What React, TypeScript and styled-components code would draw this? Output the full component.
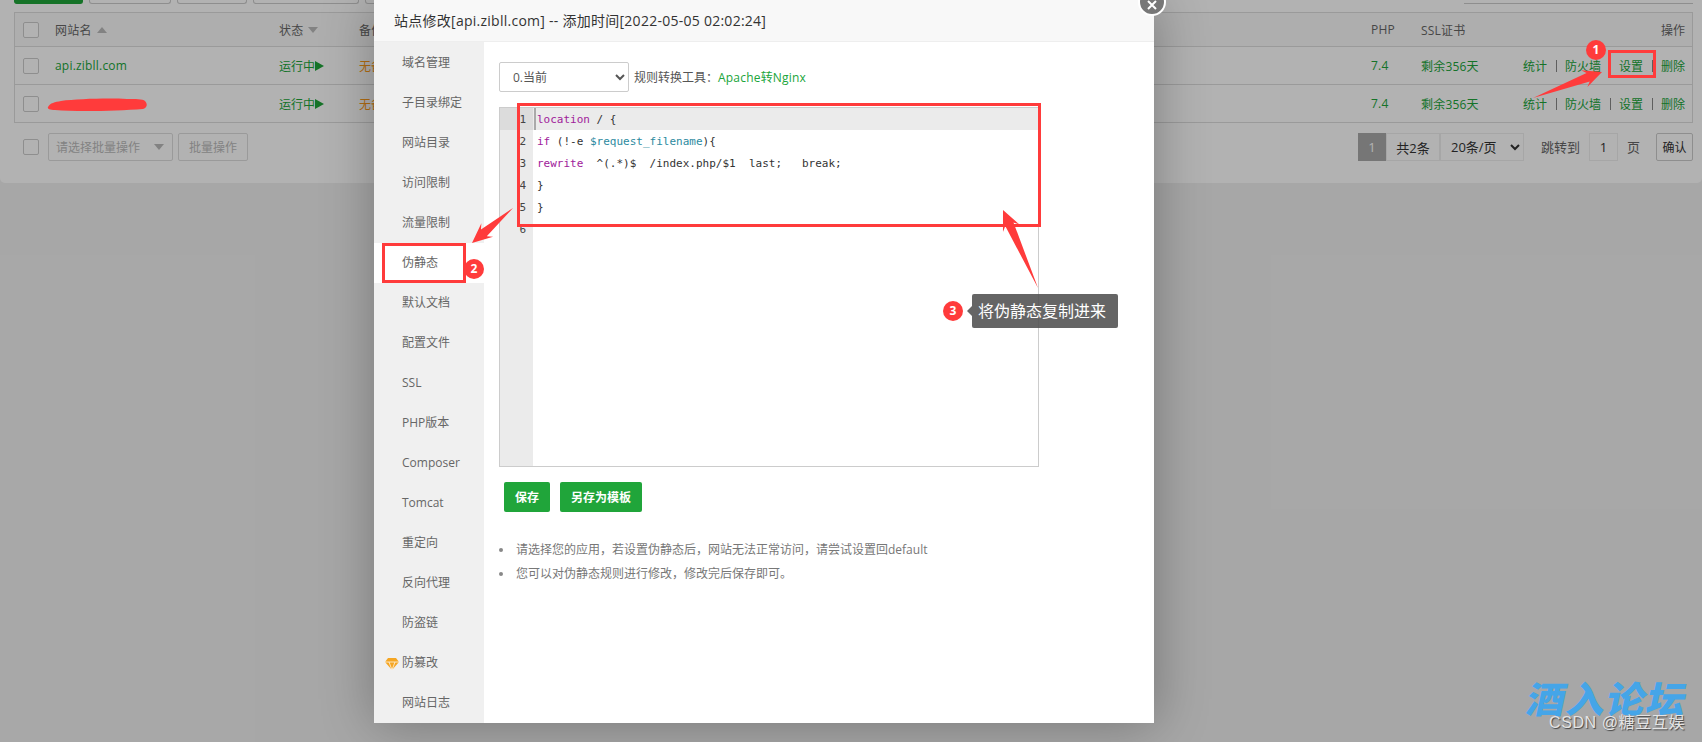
import React from 'react';
import styled, { createGlobalStyle } from 'styled-components';

const GlobalStyle = createGlobalStyle`
  html, body {
    margin: 0;
    padding: 0;
    overflow: hidden;
    background: #f0f0f0;
  }
  * {
    box-sizing: border-box;
  }
`;

const colors = {
  green: '#20a53a',
  red: '#ff3b3b',
  text: '#666',
  line: '#ddd',
};

const Page = styled.div`
  position: relative;
  width: 1702px;
  height: 742px;
  overflow: hidden;
  background: #f0f0f0;
  color: ${colors.text};
  font: 12px 'Open Sans', 'Noto Sans CJK SC', sans-serif;
`;

const Panel = styled.div`
  height: 183px;
  padding: 0 9px 0 14px;
  background: #fff;
  border-radius: 0 0 5px 5px;
`;

const TopBar = styled.div`
  display: flex;
  align-items: flex-end;
  height: 12px;
  padding-bottom: 8px;
  gap: 6px;
`;

const TopButton = styled.div<{ $w: number; $green?: boolean }>`
  width: ${({ $w }) => $w}px;
  height: 4px;
  background: ${({ $green }) => ($green ? colors.green : '#fff')};
  border: 1px solid ${({ $green }) => ($green ? colors.green : '#ccc')};
  border-top: 0;
  border-radius: 0 0 3px 3px;
`;

const TopSearch = styled.div`
  width: 229px;
  height: 2px;
  margin-left: auto;
  border-bottom: 1px solid #ccc;
`;

const Table = styled.div`
  border: 1px solid ${colors.line};
`;

const Row = styled.div<{ $head?: boolean }>`
  display: grid;
  grid-template-columns: 40px 224px 80px 1012px 50px 1fr auto;
  align-items: center;
  height: ${({ $head }) => ($head ? 34 : 38)}px;
  background: ${({ $head }) => ($head ? '#fafafa' : '#fff')};
  border-top: ${({ $head }) => ($head ? '0' : `1px solid ${colors.line}`)};
  &:first-child {
    height: 33px;
  }
`;

const Check = styled.span<{ $flush?: boolean }>`
  display: block;
  flex: none;
  width: 16px;
  height: 16px;
  margin-left: ${({ $flush }) => ($flush ? 0 : 8)}px;
  background: #fff;
  border: 1px solid #ccc;
  border-radius: 2px;
`;

const HeadCell = styled.span`
  display: flex;
  align-items: center;
  gap: 5px;
  letter-spacing: 0.2px;
`;

const HeadOps = styled.span`
  padding-right: 7px;
`;

const Caret = styled.i<{ $up?: boolean }>`
  width: 0;
  height: 0;
  border-left: 5px solid transparent;
  border-right: 5px solid transparent;
  ${({ $up }) => ($up ? 'border-bottom: 6px solid #bbb;' : 'border-top: 6px solid #bbb;')}
`;

const Link = styled.span`
  color: ${colors.green};
  letter-spacing: 0.2px;
`;

const Run = styled(Link)`
  display: flex;
  align-items: center;
  letter-spacing: 0;
`;

const Play = styled.i`
  width: 0;
  height: 0;
  border-left: 9px solid ${colors.green};
  border-top: 5px solid transparent;
  border-bottom: 5px solid transparent;
`;

const Backup = styled.span`
  color: #ff9c1a;
  white-space: nowrap;
`;

const Ops = styled.span`
  display: flex;
  align-items: center;
  padding-right: 7px;
  color: ${colors.green};
`;

const Sep = styled.span`
  width: 1px;
  height: 12px;
  margin: 0 8px 0 9px;
  background: #888;
`;

const Toolbar = styled.div`
  display: flex;
  align-items: center;
  height: 28px;
  margin-top: 10px;
  padding-left: 9px;
`;

const BulkSelect = styled.div`
  display: flex;
  align-items: center;
  justify-content: space-between;
  width: 125px;
  height: 28px;
  margin-left: 9px;
  padding: 0 8px 0 7px;
  color: #bbb;
  border: 1px solid #ddd;
  border-radius: 2px;
`;

const BulkButton = styled.div`
  display: flex;
  align-items: center;
  justify-content: center;
  width: 70px;
  height: 28px;
  margin-left: 5px;
  color: #bbb;
  border: 1px solid #ddd;
  border-radius: 2px;
`;

const Pager = styled.div`
  display: flex;
  align-items: center;
  height: 28px;
  margin-left: auto;
  font-size: 13px;
`;

const PageCell = styled.span<{ $w: number; $on?: boolean }>`
  display: flex;
  align-items: center;
  justify-content: center;
  width: ${({ $w }) => $w}px;
  height: 28px;
  color: ${({ $on }) => ($on ? '#fff' : '#333')};
  background: ${({ $on }) => ($on ? '#aaa' : '#fff')};
  border: 1px solid ${({ $on }) => ($on ? '#aaa' : '#eee')};
`;

const PageSelect = styled.select`
  width: 84px;
  height: 28px;
  padding-left: 6px;
  color: #333;
  font: inherit;
  background: #fff;
  border: 1px solid #eee;
  border-radius: 0;
  outline: none;
`;

const PageText = styled.span<{ $after?: boolean }>`
  margin: ${({ $after }) => ($after ? '-2px 0 0 9px' : '-2px 9px 0 17px')};
  color: #666;
`;

const Confirm = styled.div`
  display: flex;
  align-items: center;
  justify-content: center;
  width: 37px;
  height: 28px;
  margin-left: 16px;
  color: #333;
  font-size: 12px;
  border: 1px solid #ccc;
  border-radius: 2px;
`;

const Shade = styled.div`
  position: absolute;
  inset: 0;
  background: rgba(0, 0, 0, 0.3);
`;

const Modal = styled.div`
  position: absolute;
  left: 374px;
  top: 0;
  display: flex;
  flex-direction: column;
  width: 780px;
  height: 723px;
  background: #fff;
  box-shadow: 1px 1px 50px rgba(0, 0, 0, 0.3);
`;

const ModalTitle = styled.div`
  height: 42px;
  padding: 0 20px;
  line-height: 41px;
  font-size: 14px;
  letter-spacing: 0.26px;
  color: #333;
  background: #f8f8f8;
  border-bottom: 1px solid #eee;
`;

const CloseButton = styled.div`
  position: absolute;
  right: -12px;
  top: -12px;
  display: flex;
  align-items: center;
  justify-content: center;
  width: 28px;
  height: 28px;
  padding-top: 6px;
  background: #777;
  border: 2px solid #fff;
  border-radius: 50%;
`;

const ModalBody = styled.div`
  display: flex;
  flex: 1;
  min-height: 0;
`;

const Side = styled.div`
  width: 110px;
  padding-top: 1px;
  background: #f0f0f0;
`;

const SideItem = styled.div<{ $on?: boolean }>`
  position: relative;
  height: 40px;
  padding-left: 28px;
  line-height: 40px;
  color: #666;
  background: ${({ $on }) => ($on ? '#fff' : 'transparent')};
`;

const Gem = styled.svg`
  position: absolute;
  left: 11px;
  top: 15px;
`;

const Content = styled.div`
  flex: 1;
  padding: 20px 15px 0;
`;

const RuleBar = styled.div`
  display: flex;
  align-items: center;
  height: 30px;
`;

const RuleSelect = styled.select`
  width: 130px;
  height: 30px;
  padding-left: 9px;
  color: #555;
  font: inherit;
  background: #fff;
  border: 1px solid #ccc;
  border-radius: 2px;
  outline: none;
`;

const RuleLabel = styled.span`
  margin-left: 5px;
  color: #555;
`;

const Editor = styled.div`
  display: flex;
  flex-direction: column;
  width: 540px;
  height: 360px;
  margin-top: 15px;
  background: #fff;
  border: 1px solid #ccc;
  overflow: hidden;
`;

const CodeLine = styled.div<{ $on?: boolean; $fill?: boolean }>`
  display: flex;
  height: 22px;
  flex: ${({ $fill }) => ($fill ? 1 : 'none')};
  background: ${({ $on }) => ($on ? '#ebebeb' : 'transparent')};
`;

const LineNo = styled.div<{ $on?: boolean }>`
  flex: none;
  width: 33px;
  padding: 1px 7px 0 0;
  text-align: right;
  color: #444;
  font: 11px/22px 'DejaVu Sans Mono', monospace;
  background: ${({ $on }) => ($on ? '#dcdcdc' : '#ebebeb')};
`;

const CodeText = styled.div<{ $on?: boolean }>`
  padding: 1px 0 0 1px;
  margin-left: 1px;
  color: #333;
  white-space: pre;
  font: 11px/22px 'DejaVu Sans Mono', monospace;
  border-left: 2px solid ${({ $on }) => ($on ? '#aaa' : 'transparent')};
`;

const Keyword = styled.span`
  color: #a0209a;
`;

const Variable = styled.span`
  color: #2c8aa0;
`;

const Actions = styled.div`
  display: flex;
  gap: 10px;
  margin: 15px 0 0 5px;
`;

const GreenButton = styled.div`
  display: flex;
  align-items: center;
  justify-content: center;
  height: 30px;
  padding: 0 11px;
  color: #fff;
  font-weight: 700;
  background: ${colors.green};
  border-radius: 2px;
`;

const Notes = styled.ul`
  margin: 26px 0 0;
  padding: 0 0 0 17px;
  list-style: none;
`;

const Note = styled.li`
  position: relative;
  height: 24px;
  line-height: 24px;
  color: #777;
  &::before {
    content: '';
    position: absolute;
    left: -17px;
    top: 10px;
    width: 4px;
    height: 4px;
    border-radius: 50%;
    background: #888;
  }
`;

const Marks = styled.svg`
  position: absolute;
  left: 0;
  top: 0;
`;

const RedBox = styled.div<{ $x: number; $y: number; $w: number; $h: number }>`
  position: absolute;
  left: ${({ $x }) => $x}px;
  top: ${({ $y }) => $y}px;
  width: ${({ $w }) => $w}px;
  height: ${({ $h }) => $h}px;
  border: 3px solid ${colors.red};
`;

const Badge = styled.div<{ $x: number; $y: number }>`
  position: absolute;
  left: ${({ $x }) => $x - 10}px;
  top: ${({ $y }) => $y - 10}px;
  width: 20px;
  height: 20px;
  text-align: center;
  color: #fff;
  font: 700 12px/20px 'Open Sans', sans-serif;
  background: ${colors.red};
  border-radius: 50%;
`;

const Tip = styled.div`
  position: absolute;
  left: 972px;
  top: 294px;
  width: 146px;
  height: 34px;
  padding-left: 6px;
  color: #fff;
  font-size: 16px;
  line-height: 34px;
  background: rgba(80, 80, 80, 0.88);
  border-radius: 2px;
  &::before {
    content: '';
    position: absolute;
    left: -5px;
    top: 12px;
    border-top: 5px solid transparent;
    border-bottom: 5px solid transparent;
    border-right: 5px solid rgba(80, 80, 80, 0.88);
  }
`;

const Logo = styled.div`
  position: absolute;
  left: 1528px;
  top: 672px;
  color: #45a5e8;
  font: 900 39px/50px 'Noto Sans CJK SC', sans-serif;
  letter-spacing: 1px;
  white-space: nowrap;
  transform: skewX(-12deg) scaleY(0.94);
`;

const Credit = styled.div`
  position: absolute;
  left: 1549px;
  top: 713px;
  color: #e4e4e4;
  font: 16px/20px 'Liberation Sans', 'Noto Sans CJK SC', sans-serif;
  letter-spacing: 0.6px;
  text-shadow: 1px 1px 1px #444;
  white-space: nowrap;
`;

type Point = [number, number];

// narrow tail that widens up to a barbed head, like a screenshot tool arrow
const arrowPoints = (tail: Point, tip: Point, headLen: number, headHalf: number, neckHalf: number) => {
  const dx = tip[0] - tail[0];
  const dy = tip[1] - tail[1];
  const len = Math.hypot(dx, dy);
  const ux = dx / len;
  const uy = dy / len;
  const at = (back: number, side: number) => `${tip[0] - ux * back - uy * side},${tip[1] - uy * back + ux * side}`;
  return [
    `${tail[0]},${tail[1]}`,
    at(headLen * 0.78, neckHalf),
    at(headLen, headHalf),
    `${tip[0]},${tip[1]}`,
    at(headLen, -headHalf),
    at(headLen * 0.78, -neckHalf),
  ].join(' ');
};

const sideItems = ['域名管理', '子目录绑定', '网站目录', '访问限制', '流量限制', '伪静态', '默认文档', '配置文件', 'SSL', 'PHP版本', 'Composer', 'Tomcat', '重定向', '反向代理', '防盗链', '防篡改', '网站日志'];

const OpsCell = () => (
  <Ops>
    统计<Sep />防火墙<Sep />设置<Sep />删除
  </Ops>
);

const App = () => (
  <Page>
    <GlobalStyle />
    <Panel>
      <TopBar>
        <TopButton $w={69} $green />
        <TopButton $w={82} />
        <TopButton $w={70} />
        <TopButton $w={106} />
        <TopButton $w={70} />
        <TopSearch />
      </TopBar>
      <Table>
        <Row $head>
          <Check />
          <HeadCell>网站名<Caret $up /></HeadCell>
          <HeadCell>状态<Caret /></HeadCell>
          <HeadCell>备份</HeadCell>
          <HeadCell>PHP</HeadCell>
          <HeadCell>SSL证书</HeadCell>
          <HeadOps>操作</HeadOps>
        </Row>
        <Row>
          <Check />
          <Link>api.zibll.com</Link>
          <Run>运行中<Play /></Run>
          <Backup>无备份</Backup>
          <Link>7.4</Link>
          <Link>剩余356天</Link>
          <OpsCell />
        </Row>
        <Row>
          <Check />
          <span />
          <Run>运行中<Play /></Run>
          <Backup>无备份</Backup>
          <Link>7.4</Link>
          <Link>剩余356天</Link>
          <OpsCell />
        </Row>
      </Table>
      <Toolbar>
        <Check $flush />
        <BulkSelect>请选择批量操作<Caret /></BulkSelect>
        <BulkButton>批量操作</BulkButton>
        <Pager>
          <PageCell $w={28} $on>1</PageCell>
          <PageCell $w={54}>共2条</PageCell>
          <PageSelect defaultValue="20">
            <option value="20">20条/页</option>
          </PageSelect>
          <PageText>跳转到</PageText>
          <PageCell $w={29}>1</PageCell>
          <PageText $after>页</PageText>
          <Confirm>确认</Confirm>
        </Pager>
      </Toolbar>
    </Panel>

    <Shade />

    <Modal>
      <ModalTitle>站点修改[api.zibll.com] -- 添加时间[2022-05-05 02:02:24]</ModalTitle>
      <CloseButton>
        <svg width="12" height="12" viewBox="0 0 12 12">
          <path d="M2 2 L10 10 M10 2 L2 10" stroke="#fff" strokeWidth="2" />
        </svg>
      </CloseButton>
      <ModalBody>
        <Side>
          {sideItems.map((item) => (
            <SideItem key={item} $on={item === '伪静态'}>
              {item === '防篡改' && (
                <Gem width="14" height="12" viewBox="0 0 14 12">
                  <path d="M3 0 H11 L14 4 L7 12 L0 4 Z" fill="#f5a623" />
                  <path d="M0 4 H14 M4 4 L7 12 L10 4" stroke="#fff" strokeWidth="0.7" fill="none" />
                </Gem>
              )}
              {item}
            </SideItem>
          ))}
        </Side>
        <Content>
          <RuleBar>
            <RuleSelect defaultValue="0">
              <option value="0">0.当前</option>
            </RuleSelect>
            <RuleLabel>规则转换工具：<Link>Apache转Nginx</Link></RuleLabel>
          </RuleBar>
          <Editor>
            <CodeLine $on>
              <LineNo $on>1</LineNo>
              <CodeText $on><Keyword>location</Keyword> / {'{'}</CodeText>
            </CodeLine>
            <CodeLine>
              <LineNo>2</LineNo>
              <CodeText><Keyword>if</Keyword> (!-e <Variable>$request_filename</Variable>){'{'}</CodeText>
            </CodeLine>
            <CodeLine>
              <LineNo>3</LineNo>
              <CodeText><Keyword>rewrite</Keyword>{'  ^(.*)$  /index.php/$1  last;   break;'}</CodeText>
            </CodeLine>
            <CodeLine>
              <LineNo>4</LineNo>
              <CodeText>{'}'}</CodeText>
            </CodeLine>
            <CodeLine>
              <LineNo>5</LineNo>
              <CodeText>{'}'}</CodeText>
            </CodeLine>
            <CodeLine $fill>
              <LineNo>6</LineNo>
            </CodeLine>
          </Editor>
          <Actions>
            <GreenButton>保存</GreenButton>
            <GreenButton>另存为模板</GreenButton>
          </Actions>
          <Notes>
            <Note>请选择您的应用，若设置伪静态后，网站无法正常访问，请尝试设置回default</Note>
            <Note>您可以对伪静态规则进行修改，修改完后保存即可。</Note>
          </Notes>
        </Content>
      </ModalBody>
    </Modal>

    <RedBox $x={1608} $y={50} $w={48} $h={28} />
    <RedBox $x={382} $y={243} $w={84} $h={40} />
    <RedBox $x={517} $y={103} $w={524} $h={124} />
    <Marks width="1702" height="742" viewBox="0 0 1702 742">
      <path d="M48 107 C50 103 55 102 61 101 C77 99 107 98 127 99 C135 99 143 99 145 101 C148 104 147 108 143 109 C117 111 77 112 55 110 C50 110 47 109 48 107 Z" fill={colors.red} />
      <polygon points={arrowPoints([1533, 98], [1602, 72], 19, 9, 4.5)} fill={colors.red} />
      <polygon points={arrowPoints([513, 208], [472, 243], 20, 9, 4.5)} fill={colors.red} />
      <polygon points={arrowPoints([1038, 288], [1003, 210], 20, 9, 4.5)} fill={colors.red} />
    </Marks>
    <Badge $x={1596} $y={50}>1</Badge>
    <Badge $x={474} $y={269}>2</Badge>
    <Badge $x={953} $y={311}>3</Badge>
    <Tip>将伪静态复制进来</Tip>
    <Logo>酒入论坛</Logo>
    <Credit>CSDN @糖豆互娱</Credit>
  </Page>
);

export default App;
